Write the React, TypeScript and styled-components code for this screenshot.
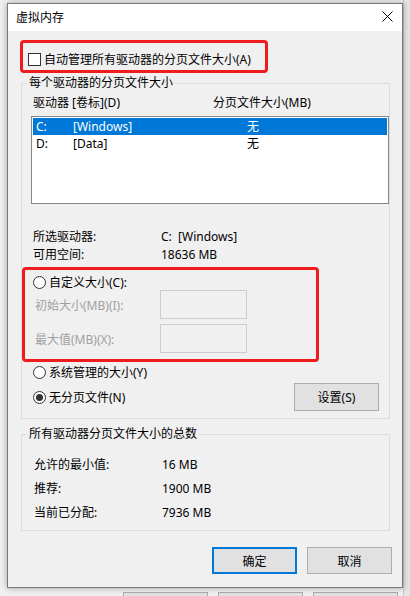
import React from "react";
import styled, { createGlobalStyle } from "styled-components";

const GlobalStyle = createGlobalStyle`
  html, body {
    margin: 0;
    padding: 0;
  }
  body {
    font-family: "Noto Sans", "Noto Sans CJK SC", sans-serif;
    font-size: 12px;
    color: #000;
    background: #f0f0f0;
  }
`;

const Screen = styled.div`
  width: 410px;
  height: 596px;
  overflow: hidden;
  display: grid;
  grid-template-columns: 7px 396px 7px;
  grid-template-rows: 3px 585px 8px;
  background: #f0f0f0;
`;

const RightStrip = styled.div`
  grid-column: 3;
  grid-row: 1 / 4;
  background: #e4e4e4;
  border-left: 1px solid #c8c8c8;
`;

const BehindButtons = styled.div`
  grid-column: 1 / 4;
  grid-row: 3;
  display: flex;
  gap: 10px;
  padding: 4px 0 0 123px;
`;

const BehindButton = styled.div`
  width: 85px;
  height: 12px;
  box-sizing: border-box;
  border: 1px solid #adadad;
  background: #e1e1e1;
`;

const Dialog = styled.div`
  grid-column: 2;
  grid-row: 2;
  box-sizing: border-box;
  border: 1px solid #7a7a7a;
  background: #f0f0f0;
  display: flex;
  flex-direction: column;
  box-shadow: 0 0 6px rgba(0, 0, 0, 0.35);
  position: relative;
  z-index: 1;
`;

const TitleBar = styled.div`
  height: 27px;
  background: #fff;
  display: flex;
  align-items: center;
  justify-content: space-between;
  padding: 0 0 2px 8px;
  box-sizing: border-box;
`;

const Title = styled.span`
  font-family: "Noto Sans CJK SC", sans-serif;
  font-size: 12px;
`;

const CloseButton = styled.div`
  width: 30px;
  height: 100%;
  display: flex;
  align-items: center;
  justify-content: center;
`;

const Body = styled.div`
  display: flex;
  flex-direction: column;
  padding: 0 12px 0 13px;
`;

const Highlight = styled.div<{ $width: number }>`
  width: ${(p) => p.$width}px;
  box-sizing: border-box;
  border: 3px solid #ee1c1c;
  border-radius: 4px;
  display: flex;
  flex-direction: column;
`;

const AutoHighlight = styled(Highlight)`
  margin: 9px 0 0 -1px;
  height: 33px;
  padding: 8px 0 0 5px;
`;

const CustomHighlight = styled(Highlight)`
  margin-top: 4px;
  padding: 4px 0 6px 8px;
`;

const Option = styled.label<{ $indent?: number; $top?: number }>`
  display: flex;
  align-items: center;
  gap: 3px;
  height: 16px;
  margin-top: ${(p) => p.$top ?? 0}px;
  padding-left: ${(p) => p.$indent ?? 0}px;
  white-space: nowrap;
`;

const Checkbox = styled.span`
  width: 13px;
  height: 13px;
  box-sizing: border-box;
  border: 1px solid #333;
  background: #fff;
  flex-shrink: 0;
`;

const Radio = styled.span<{ $checked?: boolean }>`
  width: 13px;
  height: 13px;
  box-sizing: border-box;
  border: 1px solid #333;
  border-radius: 50%;
  background: #fff;
  flex-shrink: 0;
  display: flex;
  align-items: center;
  justify-content: center;

  &::after {
    content: "";
    width: 7px;
    height: 7px;
    border-radius: 50%;
    background: ${(p) => (p.$checked ? "#333" : "transparent")};
  }
`;

const Group = styled.fieldset<{ $top: number; $bottom: number }>`
  margin: ${(p) => p.$top}px 0 0 0;
  padding: 0 0 ${(p) => p.$bottom}px 0;
  border: 1px solid #dcdcdc;
  min-width: 0;
  display: flex;
  flex-direction: column;
`;

const Legend = styled.legend`
  margin-left: 5px;
  padding: 0 2px;
  line-height: 16px;
`;

const ColumnHeader = styled.div`
  margin-top: 4px;
  height: 16px;
  line-height: 16px;
  padding-left: 11px;
  display: grid;
  grid-template-columns: 180px 1fr;
`;

const ListBox = styled.div`
  margin: 5px 0 0 9px;
  height: 88px;
  box-sizing: border-box;
  border: 1px solid #828790;
  background: #fff;
  padding: 1px;
`;

const DriveRow = styled.div<{ $selected?: boolean }>`
  height: 17px;
  line-height: 17px;
  padding-left: 3px;
  display: grid;
  grid-template-columns: 37px 174px 1fr;
  background: ${(p) => (p.$selected ? "#0078d7" : "transparent")};
  color: ${(p) => (p.$selected ? "#fff" : "#000")};
`;

const InfoGrid = styled.div<{ $top: number; $indent: number; $gap: number; $row: number }>`
  margin-top: ${(p) => p.$top}px;
  padding-left: ${(p) => p.$indent}px;
  display: grid;
  grid-template-columns: 128px 1fr;
  grid-auto-rows: ${(p) => p.$row}px;
  row-gap: ${(p) => p.$gap}px;
  align-items: center;
`;

const SizeRow = styled.div`
  display: flex;
  align-items: center;
  height: 29px;

  & + & {
    margin-top: 5px;
  }
`;

const DisabledLabel = styled.span`
  width: 125px;
  margin-left: 2px;
  color: #a0a0a0;
`;

const DisabledInput = styled.div`
  width: 87px;
  height: 29px;
  box-sizing: border-box;
  border: 1px solid #cccccc;
  background: #f0f0f0;
`;

const NoPageRow = styled.div`
  margin-top: 3px;
  height: 28px;
  display: flex;
  align-items: center;
  justify-content: space-between;
  padding: 0 10px 0 11px;
`;

const Button = styled.button<{ $default?: boolean; $height?: number }>`
  width: 85px;
  height: ${(p) => p.$height ?? 27}px;
  box-sizing: border-box;
  border: ${(p) => (p.$default ? "2px solid #0078d7" : "1px solid #adadad")};
  background: #e1e1e1;
  font-family: "Noto Sans", "Noto Sans CJK SC", sans-serif;
  font-size: 12px;
  color: #000;
  padding: 0;
`;

const Footer = styled.div`
  margin: 16px -2px 0 0;
  display: flex;
  justify-content: flex-end;
  gap: 10px;
`;

const drives = [
  { letter: "C:", label: "[Windows]", size: "无", selected: true },
  { letter: "D:", label: "[Data]", size: "无", selected: false },
];

const totals = [
  ["允许的最小值:", "16 MB"],
  ["推荐:", "1900 MB"],
  ["当前已分配:", "7936 MB"],
];

export default function App() {
  return (
    <>
      <GlobalStyle />
      <Screen>
        <Dialog>
          <TitleBar>
            <Title>虚拟内存</Title>
            <CloseButton>
              <svg width="11" height="11" viewBox="0 0 11 11">
                <path d="M0.5 0.5 L10.5 10.5 M10.5 0.5 L0.5 10.5" stroke="#000" strokeWidth="1" />
              </svg>
            </CloseButton>
          </TitleBar>
          <Body>
            <AutoHighlight $width={248}>
              <Option>
                <Checkbox />
                自动管理所有驱动器的分页文件大小(A)
              </Option>
            </AutoHighlight>

            <Group $top={2} $bottom={7}>
              <Legend>每个驱动器的分页文件大小</Legend>
              <ColumnHeader>
                <span>驱动器 [卷标](D)</span>
                <span>分页文件大小(MB)</span>
              </ColumnHeader>
              <ListBox>
                {drives.map((d) => (
                  <DriveRow key={d.letter} $selected={d.selected}>
                    <span>{d.letter}</span>
                    <span>{d.label}</span>
                    <span>{d.size}</span>
                  </DriveRow>
                ))}
              </ListBox>
              <InfoGrid $top={23} $indent={11} $gap={0} $row={18}>
                <span>所选驱动器:</span>
                <span>C:&nbsp;&nbsp;[Windows]</span>
                <span>可用空间:</span>
                <span>18636 MB</span>
              </InfoGrid>
              <CustomHighlight $width={297}>
                <Option>
                  <Radio />
                  自定义大小(C):
                </Option>
                <SizeRow>
                  <DisabledLabel>初始大小(MB)(I):</DisabledLabel>
                  <DisabledInput />
                </SizeRow>
                <SizeRow>
                  <DisabledLabel>最大值(MB)(X):</DisabledLabel>
                  <DisabledInput />
                </SizeRow>
              </CustomHighlight>
              <Option $indent={11} $top={2}>
                <Radio />
                系统管理的大小(Y)
              </Option>
              <NoPageRow>
                <Option>
                  <Radio $checked />
                  无分页文件(N)
                </Option>
                <Button $height={28}>设置(S)</Button>
              </NoPageRow>
            </Group>

            <Group $top={7} $bottom={10}>
              <Legend>所有驱动器分页文件大小的总数</Legend>
              <InfoGrid $top={14} $indent={12} $gap={8} $row={16}>
                {totals.map(([k, v]) => (
                  <React.Fragment key={k}>
                    <span>{k}</span>
                    <span>{v}</span>
                  </React.Fragment>
                ))}
              </InfoGrid>
            </Group>

            <Footer>
              <Button $default>确定</Button>
              <Button>取消</Button>
            </Footer>
          </Body>
        </Dialog>
        <RightStrip />
        <BehindButtons>
          <BehindButton />
          <BehindButton />
          <BehindButton />
        </BehindButtons>
      </Screen>
    </>
  );
}
